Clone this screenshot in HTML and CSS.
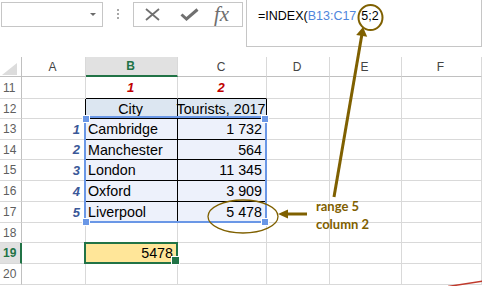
FILE: index.html
```html
<!DOCTYPE html>
<html>
<head>
<meta charset="utf-8">
<link rel="stylesheet" href="styles.css">
</head>
<body>
<div class="app">
  <div class="toolbar">
    <div class="namebox"><span class="caret"></span></div>
    <div class="dots"><i></i><i></i><i></i></div>
    <div class="fnbox">
      <svg class="ic-x" width="15" height="13" viewBox="0 0 15 13"><path d="M1 1 L14 12 M14 1 L1 12" stroke="#707070" stroke-width="1.8" fill="none"/></svg>
      <svg class="ic-ok" width="19" height="13" viewBox="0 0 19 13"><path d="M1.5 6.5 L6.5 11 L17.5 1.5" stroke="#707070" stroke-width="3" fill="none"/></svg>
      <span class="fx">fx</span>
    </div>
    <div class="formula">=INDEX(<span class="ref">B13:C17</span><span class="args">5;2</span></div>
  </div>

  <div class="sheet">
    <div class="c corner"><span class="tri"></span></div>
    <div class="c ch">A</div>
    <div class="c ch on">B</div>
    <div class="c ch">C</div>
    <div class="c ch">D</div>
    <div class="c ch">E</div>
    <div class="c ch">F</div>

    <div class="c rh">11</div>
    <div class="c"></div>
    <div class="c idx red tb">1</div>
    <div class="c idx red tb">2</div>
    <div class="c"></div><div class="c"></div><div class="c"></div>

    <div class="c rh">12</div>
    <div class="c tl"></div>
    <div class="c t th">City</div>
    <div class="c t th">Tourists, 2017</div>
    <div class="c"></div><div class="c"></div><div class="c"></div>

    <div class="c rh">13</div>
    <div class="c tl idx num">1</div>
    <div class="c t">Cambridge</div>
    <div class="c t r">1 732</div>
    <div class="c"></div><div class="c"></div><div class="c"></div>

    <div class="c rh">14</div>
    <div class="c tl idx num">2</div>
    <div class="c t">Manchester</div>
    <div class="c t r">564</div>
    <div class="c"></div><div class="c"></div><div class="c"></div>

    <div class="c rh">15</div>
    <div class="c tl idx num">3</div>
    <div class="c t">London</div>
    <div class="c t r">11 345</div>
    <div class="c"></div><div class="c"></div><div class="c"></div>

    <div class="c rh">16</div>
    <div class="c tl idx num">4</div>
    <div class="c t">Oxford</div>
    <div class="c t r">3 909</div>
    <div class="c"></div><div class="c"></div><div class="c"></div>

    <div class="c rh">17</div>
    <div class="c tl idx num">5</div>
    <div class="c t">Liverpool</div>
    <div class="c t r">5 478</div>
    <div class="c"></div><div class="c"></div><div class="c"></div>

    <div class="c rh">18</div>
    <div class="c"></div><div class="c"></div><div class="c"></div>
    <div class="c"></div><div class="c"></div><div class="c"></div>

    <div class="c rh on">19</div>
    <div class="c"></div>
    <div class="c sel r">5478</div>
    <div class="c"></div>
    <div class="c"></div><div class="c"></div><div class="c"></div>

    <div class="c rh">20</div>
    <div class="c"></div><div class="c"></div><div class="c"></div>
    <div class="c"></div><div class="c"></div><div class="c"></div>
  </div>

  <div class="range">
    <span class="h h-tl"></span><span class="h h-tr"></span>
    <span class="h h-bl"></span><span class="h h-br"></span>
  </div>

  <div class="note">range 5<br>column 2</div>

  <svg class="annot" width="482" height="286" viewBox="0 0 482 286">
    <ellipse cx="370.5" cy="17.5" rx="12" ry="12.5" fill="none" stroke="#7f6000" stroke-width="2"/>
    <line x1="334" y1="197" x2="361.8" y2="35" stroke="#7f6000" stroke-width="3"/>
    <polygon points="363,27 367.2,36.8 356.2,35" fill="#7f6000"/>
    <ellipse cx="243" cy="216.5" rx="35" ry="16.5" fill="none" stroke="#7f6000" stroke-width="1.3"/>
    <line x1="286" y1="214" x2="307" y2="214" stroke="#7f6000" stroke-width="3"/>
    <polygon points="278,214 288,209.5 288,218.5" fill="#7f6000"/>
    <line x1="448" y1="286.5" x2="483" y2="281" stroke="#c0392b" stroke-width="1.5"/>
  </svg>
</div>
</body>
</html>
```

FILE: styles.css
```css
* { box-sizing: border-box; margin: 0; padding: 0; }
html, body { margin: 0; background: #fff; }
body {
  width: 482px;
  height: 286px;
  overflow: hidden;
  font-family: "Liberation Sans", Arial, sans-serif;
  color: #000;
}
.app { position: relative; width: 482px; height: 286px; }

/* ---------- toolbar ---------- */
.toolbar { display: flex; align-items: flex-start; height: 57px; }
.namebox {
  margin: 2px 0 0 1px;
  width: 102px; height: 25px;
  border: 1px solid #c6c6c6;
  display: flex; justify-content: flex-end; align-items: center;
  padding-right: 6px;
}
.caret {
  width: 0; height: 0;
  border-left: 3.5px solid transparent;
  border-right: 3.5px solid transparent;
  border-top: 3.5px solid #6b6b6b;
}
.dots { margin: 9px 0 0 14px; display: flex; flex-direction: column; gap: 2px; }
.dots i { display: block; width: 2px; height: 2px; background: #a8a8a8; }
.fnbox {
  margin: 2px 0 0 14px;
  width: 110px; height: 25px;
  border: 1px solid #c6c6c6;
  display: flex; align-items: center;
  padding-left: 11px;
}
.ic-x { margin-top: -1px; }
.ic-ok { margin-left: 20px; }
.fx {
  margin-left: 15px;
  font-family: "Liberation Serif", "Times New Roman", serif;
  font-style: italic;
  font-size: 21px;
  line-height: 1;
  color: #6e6e6e;
  margin-top: -1px;
}
.formula {
  margin-left: 3px;
  width: 236px; height: 47px;
  border: 1px solid #c6c6c6;
  border-top: none;
  padding: 9px 0 0 11px;
  font-size: 12.5px;
  line-height: 14px;
  white-space: nowrap;
}
.formula .ref { color: #4f86dc; }
.formula .args { margin-left: 5px; }

/* ---------- sheet grid ---------- */
.sheet {
  display: grid;
  grid-template-columns: 22px 64px 92px 89px 63px 72px 80px;
  grid-template-rows: 20px 22px 20px 21px 20px 21px 21px 21px 20px 21px 21px;
}
.c {
  border-right: 1px solid #d9d9d9;
  border-bottom: 1px solid #d9d9d9;
  display: flex; align-items: center;
  padding: 0 4px 0 2px;
  font-size: 14.3px;
  white-space: nowrap;
}
.corner {
  justify-content: flex-end; align-items: flex-end;
  padding: 0 4px 1px 0;
  border-bottom-color: #c0c0c0;
  border-right-color: #c0c0c0;
}
.tri {
  width: 0; height: 0;
  border-left: 15px solid transparent;
  border-bottom: 12px solid #dcdcdc;
}
.ch {
  justify-content: center;
  font-size: 12px;
  color: #444;
  border-bottom-color: #c0c0c0;
}
.ch.on {
  background: #e1e1e1;
  color: #217346;
  font-weight: bold;
  border-bottom: 2px solid #217346;
}
.rh {
  font-size: 12px;
  color: #5e5e5e;
  padding-left: 3px;
  border-right-color: #c0c0c0;
}
.rh.on {
  background: #e1e1e1;
  color: #217346;
  font-weight: bold;
  border-right: 2px solid #217346;
}

.idx { font-weight: bold; font-style: italic; font-size: 13px; }
.red { color: #c00000; justify-content: center; }
.num { color: #3a5898; justify-content: flex-end; padding-right: 5px; }
.tb { border-bottom-color: #000; }
.tl { border-right-color: #000; }
.t {
  background: #edf1fb;
  border-right-color: #000;
  border-bottom-color: #000;
}
.th { background: #dce6f1; justify-content: center; }
.r { justify-content: flex-end; }

.sel { position: relative; z-index: 1; background: #ffe699; }
.sel::after {
  content: "";
  position: absolute;
  left: -2px; top: -1px; right: -1px; bottom: -1px;
  border: 2px solid #217346;
}
.sel::before {
  content: "";
  position: absolute;
  right: -3px; bottom: -2px;
  width: 7px; height: 7px;
  background: #217346;
  border: 1px solid #fff;
  z-index: 2;
}

/* ---------- overlays ---------- */
.range {
  position: absolute;
  left: 84px; top: 116px;
  width: 183px; height: 107px;
  border: 2px solid #6a97e6;
}
.h {
  position: absolute;
  width: 6px; height: 6px;
  background: #6a97e6;
  outline: 1px solid #fff;
}
.h-tl { left: -3px; top: -2px; }
.h-tr { right: -3px; top: -2px; }
.h-bl { left: -3px; bottom: -4px; }
.h-br { right: -3px; bottom: -4px; }

.note {
  position: absolute;
  left: 316px; top: 197px;
  font-family: Lato, "Open Sans", sans-serif;
  font-weight: bold;
  font-size: 13px;
  line-height: 18px;
  color: #7f6000;
}
.annot { position: absolute; left: 0; top: 0; pointer-events: none; }
```
